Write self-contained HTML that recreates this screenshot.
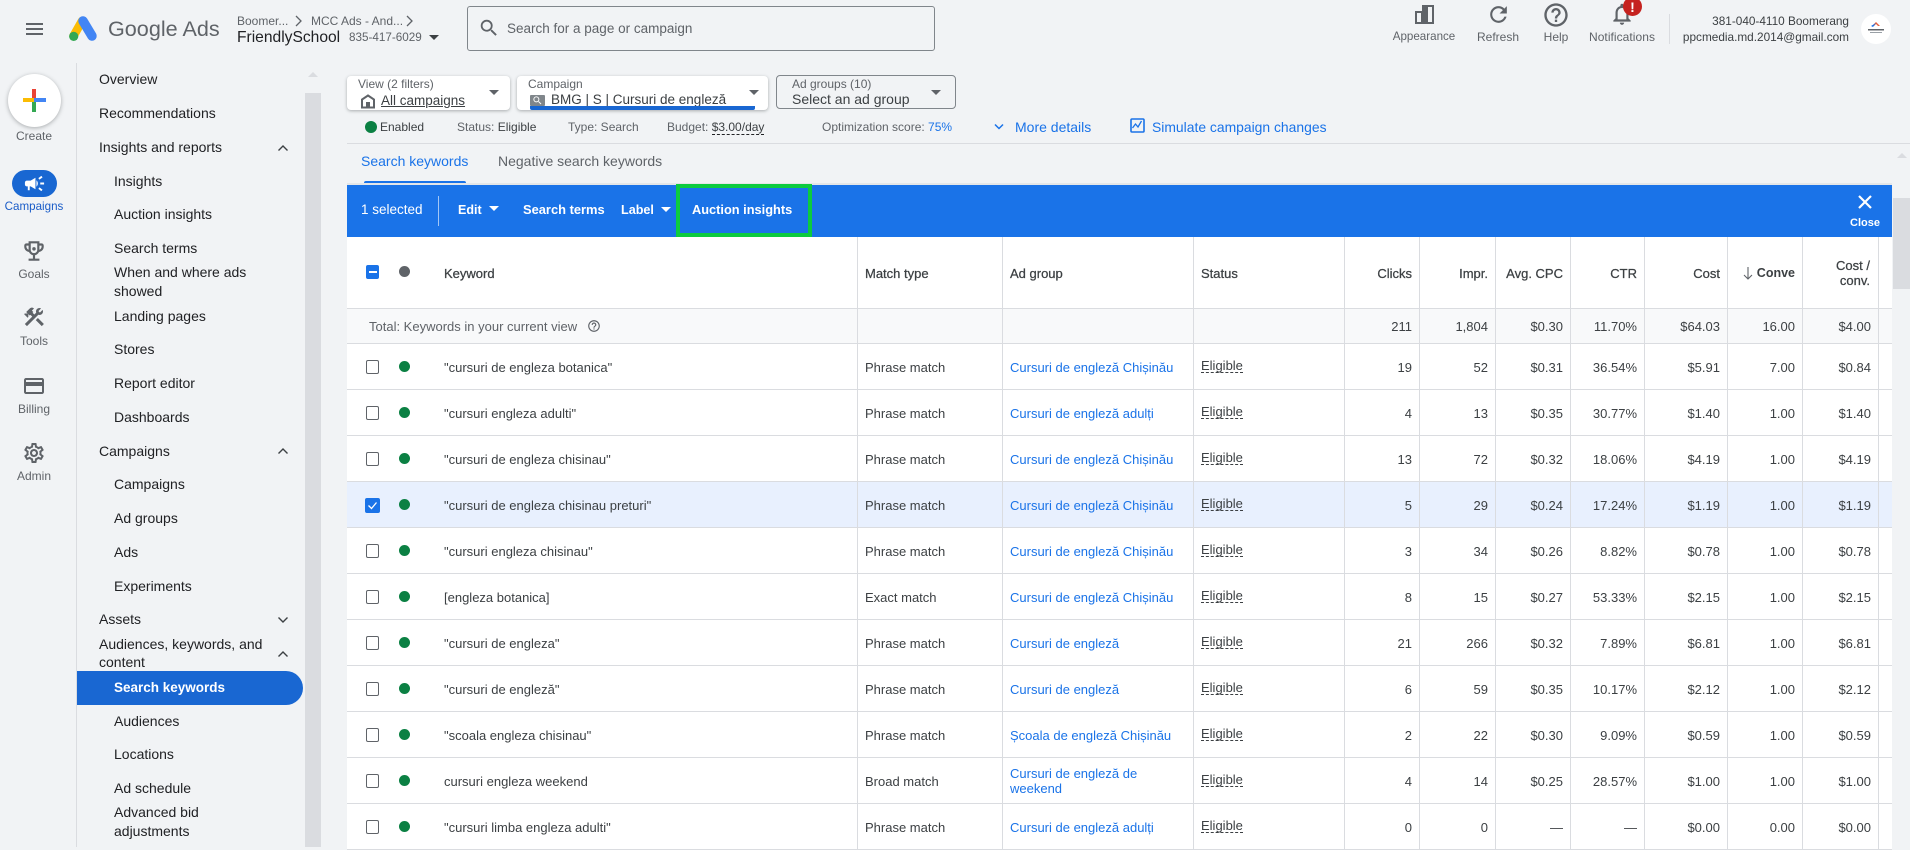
<!DOCTYPE html>
<html><head><meta charset="utf-8"><title>Google Ads</title>
<style>
html,body{margin:0;padding:0;width:1910px;height:847px;overflow:hidden;background:#f1f3f5;font-family:"Liberation Sans",sans-serif;color:#3c4043}
*{box-sizing:border-box}
.t{position:absolute;white-space:nowrap;line-height:16px;font-size:13px}
.nav{font-size:14px;color:#202124}
.c{transform:translateX(-50%);font-size:12px;color:#5f6368}
svg{position:absolute;display:block}
.b{position:absolute}
.card{position:absolute;background:#fff;border-radius:4px;box-shadow:0 1px 3px rgba(60,64,67,.4)}
.caret{position:absolute;width:0;height:0;border-left:5px solid transparent;border-right:5px solid transparent;border-top:5px solid #5f6368}
table{position:absolute;left:347px;top:237px;width:1545px;border-collapse:separate;border-spacing:0;table-layout:fixed;background:#fff;font-size:13px;color:#3c4043}
td,th{border-right:1px solid #dadce0;border-bottom:1px solid #dadce0;padding:1px 7px 0 7px;height:46px;overflow:hidden;font-weight:normal;text-align:left;white-space:nowrap;line-height:15px}
td.n,th.n{text-align:right;padding-right:7px}
td.e{border-right:0}
th{height:72px;-webkit-text-stroke:.25px #3c4043}
tr.tot td{height:35px;background:#f8f9fa}
tr.sel td{background:#e8f0fe}
td.k{position:relative;padding-left:97px}
.cb{position:absolute;left:19px;top:16px;width:13px;height:14px;border:1px solid #5f6368;border-radius:2px;background:#fff}
.dot{position:absolute;left:52px;top:17px;width:11px;height:11px;border-radius:50%;background:#0b8043}
a{color:#1a73e8;text-decoration:none}
.el{display:inline-block;position:relative;top:-2px;line-height:13px;border-bottom:1px dashed #3c4043}
</style></head><body>

<!-- top bar -->
<div class="b" style="left:26px;top:23px;width:17px;height:2px;background:#5f6368"></div>
<div class="b" style="left:26px;top:28px;width:17px;height:2px;background:#5f6368"></div>
<div class="b" style="left:26px;top:33px;width:17px;height:2px;background:#5f6368"></div>
<svg style="left:64px;top:12px" width="40" height="34" viewBox="64 12 40 34"><path d="M82 21 L73.5 36" stroke="#fbbc04" stroke-width="8.5" stroke-linecap="round"/><path d="M83 21 L92 36" stroke="#4285f4" stroke-width="9.5" stroke-linecap="round"/><circle cx="73.7" cy="36.4" r="4.6" fill="#34a853"/></svg>
<div class="t" style="left:108px;top:17px;font-size:21.6px;line-height:24px;color:#5f6368">Google Ads</div>
<div class="t" style="left:237px;top:13px;font-size:12px;color:#5f6368">Boomer...</div>
<svg style="left:293px;top:14px" width="12" height="14" viewBox="0 0 12 14"><path d="M3 2l5 5-5 5" fill="none" stroke="#5f6368" stroke-width="1.3"/></svg>
<div class="t" style="left:311px;top:13px;font-size:12px;color:#5f6368">MCC Ads - And...</div>
<svg style="left:404px;top:14px" width="12" height="14" viewBox="0 0 12 14"><path d="M3 2l5 5-5 5" fill="none" stroke="#5f6368" stroke-width="1.3"/></svg>
<div class="t" style="left:237px;top:30px;font-size:15.6px;color:#202124">FriendlySchool</div>
<div class="t" style="left:349px;top:30px;font-size:11.7px;color:#5f6368">835-417-6029</div>
<div class="caret" style="left:429px;top:35px;border-top-color:#3c4043"></div>
<div class="b" style="left:467px;top:6px;width:468px;height:45px;border:1px solid #80868b;border-radius:3px"></div>
<svg style="left:478px;top:17px" width="22" height="22" viewBox="0 0 24 24" fill="#5f6368"><path d="M15.5 14h-.79l-.28-.27A6.471 6.471 0 0 0 16 9.5 6.5 6.5 0 1 0 9.5 16c1.61 0 3.09-.59 4.23-1.57l.27.28v.79l5 4.99L20.49 19l-4.99-5zm-6 0C7.01 14 5 11.99 5 9.5S7.01 5 9.5 5 14 7.01 14 9.5 11.99 14 9.5 14z"/></svg>
<div class="t" style="left:507px;top:21px;font-size:13.5px;color:#5f6368">Search for a page or campaign</div>

<svg style="left:1415px;top:5px" width="19" height="19" viewBox="0 0 19 19"><path d="M7 0H19V19H0V6H7Z" fill="#5f6368"/><rect x="2" y="8" width="4" height="9" fill="#f1f3f5"/><rect x="13" y="2" width="4" height="15" fill="#f1f3f5"/></svg>
<svg style="left:1486px;top:2px" width="25" height="25" viewBox="0 0 24 24" fill="#5f6368"><path d="M17.65 6.35A7.958 7.958 0 0 0 12 4c-4.42 0-7.99 3.58-7.99 8s3.57 8 7.99 8c3.73 0 6.84-2.55 7.73-6h-2.08A5.99 5.99 0 0 1 12 18c-3.31 0-6-2.69-6-6s2.69-6 6-6c1.66 0 3.14.69 4.22 1.78L13 11h7V4l-2.35 2.35z"/></svg>
<svg style="left:1542px;top:1px" width="28" height="28" viewBox="0 0 24 24" fill="#5f6368"><path d="M11 18h2v-2h-2v2zm1-16C6.48 2 2 6.48 2 12s4.48 10 10 10 10-4.48 10-10S17.52 2 12 2zm0 18c-4.41 0-8-3.59-8-8s3.59-8 8-8 8 3.59 8 8-3.59 8-8 8zm0-14c-2.21 0-4 1.79-4 4h2c0-1.1.9-2 2-2s2 .9 2 2c0 2-3 1.75-3 5h2c0-2.25 3-2.5 3-5 0-2.21-1.79-4-4-4z"/></svg>
<svg style="left:1609px;top:1px" width="26" height="26" viewBox="0 0 24 24" fill="#5f6368"><path d="M12 22c1.1 0 2-.9 2-2h-4c0 1.1.9 2 2 2zm6-6v-5c0-3.07-1.63-5.64-4.5-6.32V4c0-.83-.67-1.5-1.5-1.5s-1.5.67-1.5 1.5v.68C7.64 5.36 6 7.92 6 11v5l-2 2v1h16v-1l-2-2zm-2 1H8v-6c0-2.48 1.51-4.5 4-4.5s4 2.02 4 4.5v6z"/></svg>
<div class="b" style="left:1623px;top:-3px;width:19px;height:19px;border-radius:50%;background:#c5221f"></div>
<div class="t" style="left:1628px;top:-1px;width:9px;text-align:center;font-size:14px;font-weight:bold;color:#fff">!</div>
<div class="t c" style="left:1424px;top:29px;font-size:11.6px">Appearance</div>
<div class="t c" style="left:1498px;top:29px">Refresh</div>
<div class="t c" style="left:1556px;top:29px">Help</div>
<div class="t c" style="left:1622px;top:29px;letter-spacing:.05px">Notifications</div>
<div class="b" style="left:1669px;top:14px;width:1px;height:30px;background:#dadce0"></div>
<div class="t" style="right:61px;top:13px;font-size:11.8px;color:#3c4043">381-040-4110 Boomerang</div>
<div class="t" style="right:61px;top:29px;font-size:11.8px;color:#3c4043">ppcmedia.md.2014@gmail.com</div>
<div class="b" style="left:1861px;top:14px;width:30px;height:30px;border-radius:50%;background:#fff"></div>
<svg style="left:1864px;top:20px" width="24" height="16" viewBox="0 0 24 16"><path d="M12 2l4 4h-2l-2-2-2 2H8z" fill="#e8603c"/><path d="M7 6l5-3-3 4z" fill="#1a73e8"/><rect x="4" y="9" width="16" height="1.5" fill="#5f6368"/><rect x="6" y="12" width="12" height="1" fill="#9aa0a6"/></svg>

<!-- left rail -->
<div class="b" style="left:76px;top:63px;width:1px;height:784px;background:#dadce0"></div>
<div class="b" style="left:8px;top:74px;width:53px;height:53px;border-radius:50%;background:#fff;box-shadow:0 1px 4px rgba(60,64,67,.4)"></div>
<div class="b" style="left:32px;top:89px;width:4px;height:10px;background:#ea4335"></div>
<div class="b" style="left:23px;top:98px;width:11px;height:4px;background:#fbbc04"></div>
<div class="b" style="left:34px;top:98px;width:12px;height:4px;background:#4285f4"></div>
<div class="b" style="left:32px;top:102px;width:4px;height:10px;background:#34a853"></div>
<div class="t c" style="left:34px;top:128px">Create</div>
<div class="b" style="left:12px;top:170px;width:45px;height:27px;border-radius:14px;background:#1967d2"></div>
<svg style="left:23px;top:172px" width="23" height="23" viewBox="0 0 24 24" fill="#fff"><path d="M18 11v2h4v-2h-4zm-2 6.61c.96.71 2.21 1.65 3.2 2.39.4-.53.8-1.07 1.2-1.6-.99-.74-2.24-1.68-3.2-2.4-.4.54-.8 1.08-1.2 1.61zM20.4 5.6c-.4-.53-.8-1.07-1.2-1.6-.99.74-2.24 1.68-3.2 2.4.4.53.8 1.07 1.2 1.6.96-.72 2.21-1.65 3.2-2.4zM4 9c-1.1 0-2 .9-2 2v2c0 1.1.9 2 2 2h1v4h2v-4h1l5 3V6L8 9H4zm11.5 3c0-1.33-.58-2.53-1.5-3.35v6.69c.92-.81 1.5-2.01 1.5-3.34z"/></svg>
<div class="t c" style="left:34px;top:199px;color:#1a5cc8;font-size:11.6px">Campaigns</div>
<svg style="left:21px;top:238px" width="26" height="26" viewBox="0 0 24 24" fill="#5f6368"><path d="M19 5h-2V3H7v2H5c-1.1 0-2 .9-2 2v1c0 2.55 1.92 4.63 4.39 4.94.63 1.5 1.98 2.63 3.61 2.96V19H7v2h10v-2h-4v-3.1c1.63-.33 2.98-1.46 3.61-2.96C19.08 12.63 21 10.55 21 8V7c0-1.1-.9-2-2-2zM5 8V7h2v3.82C5.84 10.4 5 9.3 5 8zm7 6c-1.65 0-3-1.35-3-3V5h6v6c0 1.65-1.35 3-3 3zm7-6c0 1.3-.84 2.4-2 2.82V7h2v1z"/><circle cx="12" cy="10" r="1.6"/></svg>
<div class="t c" style="left:34px;top:266px">Goals</div>
<svg style="left:22px;top:305px" width="24" height="24" viewBox="0 0 24 24" fill="#5f6368"><path d="M13.783 15.172l2.121-2.121 5.996 5.996-2.121 2.121zM17.5 10c1.93 0 3.5-1.57 3.5-3.5 0-.58-.16-1.12-.41-1.6l-2.7 2.7-1.49-1.49 2.7-2.7c-.48-.25-1.02-.41-1.6-.41C15.57 3 14 4.57 14 6.5c0 .41.08.8.21 1.16l-1.85 1.85-1.78-1.78.71-.71-1.41-1.41L12 3.49c-1.17-1.17-3.07-1.17-4.24 0L4.22 7.03l1.41 1.41H2.81l-.71.71 3.54 3.54.71-.71V9.15l1.41 1.41.71-.71 1.78 1.78-7.41 7.41 2.12 2.12L16.34 9.79c.36.13.75.21 1.16.21z"/></svg>
<div class="t c" style="left:34px;top:333px">Tools</div>
<svg style="left:22px;top:374px" width="24" height="24" viewBox="0 0 24 24" fill="#5f6368"><path d="M20 4H4c-1.11 0-1.99.89-1.99 2L2 18c0 1.11.89 2 2 2h16c1.11 0 2-.89 2-2V6c0-1.11-.89-2-2-2zm0 14H4v-6h16v6zm0-10H4V6h16v2z"/></svg>
<div class="t c" style="left:34px;top:401px">Billing</div>
<svg style="left:22px;top:441px" width="24" height="24" viewBox="0 0 24 24" fill="#5f6368"><path d="M19.43 12.98c.04-.32.07-.64.07-.98 0-.34-.03-.66-.07-.98l2.11-1.65c.19-.15.24-.42.12-.64l-2-3.46c-.09-.16-.26-.25-.44-.25-.06 0-.12.01-.17.03l-2.49 1c-.52-.4-1.08-.73-1.69-.98l-.38-2.65C14.46 2.18 14.25 2 14 2h-4c-.25 0-.46.18-.49.42l-.38 2.65c-.61.25-1.17.59-1.69.98l-2.49-1c-.06-.02-.12-.03-.18-.03-.17 0-.34.09-.43.25l-2 3.46c-.13.22-.07.49.12.64l2.11 1.65c-.04.32-.07.65-.07.98 0 .33.03.66.07.98l-2.11 1.65c-.19.15-.24.42-.12.64l2 3.46c.09.16.26.25.44.25.06 0 .12-.01.17-.03l2.49-1c.52.4 1.08.73 1.69.98l.38 2.65c.03.24.24.42.49.42h4c.25 0 .46-.18.49-.42l.38-2.65c.61-.25 1.17-.59 1.69-.98l2.49 1c.06.02.12.03.18.03.17 0 .34-.09.43-.25l2-3.46c.12-.22.07-.49-.12-.64l-2.11-1.65zm-1.98-1.71c.04.31.05.52.05.73 0 .21-.02.43-.05.73l-.14 1.13.89.7 1.08.84-.7 1.21-1.27-.51-1.04-.42-.9.68c-.43.32-.84.56-1.25.73l-1.06.43-.16 1.13-.2 1.35h-1.4l-.19-1.35-.16-1.13-1.06-.43c-.43-.18-.83-.41-1.23-.71l-.91-.7-1.06.43-1.27.51-.7-1.21 1.08-.84.89-.7-.14-1.13c-.03-.31-.05-.54-.05-.74s.02-.43.05-.73l.14-1.13-.89-.7-1.08-.84.7-1.21 1.27.51 1.04.42.9-.68c.43-.32.84-.56 1.25-.73l1.06-.43.16-1.13.2-1.35h1.39l.19 1.35.16 1.13 1.06.43c.43.18.83.41 1.23.71l.91.7 1.06-.43 1.27-.51.7 1.21-1.07.85-.89.7.14 1.13zM12 8c-2.21 0-4 1.79-4 4s1.79 4 4 4 4-1.79 4-4-1.79-4-4-4zm0 6c-1.1 0-2-.9-2-2s.9-2 2-2 2 .9 2 2-.9 2-2 2z"/></svg>
<div class="t c" style="left:34px;top:468px">Admin</div>

<!-- nav -->
<div class="t nav" style="left:99px;top:71px">Overview</div>
<div class="t nav" style="left:99px;top:105px">Recommendations</div>
<div class="t nav" style="left:99px;top:139px">Insights and reports</div>
<div class="t nav" style="left:114px;top:173px">Insights</div>
<div class="t nav" style="left:114px;top:206px">Auction insights</div>
<div class="t nav" style="left:114px;top:240px">Search terms</div>
<div class="t nav" style="left:114px;top:264px">When and where ads</div>
<div class="t nav" style="left:114px;top:283px">showed</div>
<div class="t nav" style="left:114px;top:308px">Landing pages</div>
<div class="t nav" style="left:114px;top:341px">Stores</div>
<div class="t nav" style="left:114px;top:375px">Report editor</div>
<div class="t nav" style="left:114px;top:409px">Dashboards</div>
<div class="t nav" style="left:99px;top:443px">Campaigns</div>
<div class="t nav" style="left:114px;top:476px">Campaigns</div>
<div class="t nav" style="left:114px;top:510px">Ad groups</div>
<div class="t nav" style="left:114px;top:544px">Ads</div>
<div class="t nav" style="left:114px;top:578px">Experiments</div>
<div class="t nav" style="left:99px;top:611px">Assets</div>
<div class="t nav" style="left:99px;top:636px">Audiences, keywords, and</div>
<div class="t nav" style="left:99px;top:654px">content</div>
<div class="b" style="left:77px;top:671px;width:226px;height:34px;background:#1967d2;border-radius:0 17px 17px 0"></div>
<div class="t nav" style="left:114px;top:680px;color:#fff;font-weight:bold;font-size:13.5px">Search keywords</div>
<div class="t nav" style="left:114px;top:713px">Audiences</div>
<div class="t nav" style="left:114px;top:746px">Locations</div>
<div class="t nav" style="left:114px;top:780px">Ad schedule</div>
<div class="t nav" style="left:114px;top:804px">Advanced bid</div>
<div class="t nav" style="left:114px;top:823px">adjustments</div>
<svg style="left:277px;top:144px" width="12" height="8" viewBox="0 0 12 8"><path d="M1.5 6.5L6 2l4.500 4.500" fill="none" stroke="#3c4043" stroke-width="1.4"/></svg>
<svg style="left:277px;top:447px" width="12" height="8" viewBox="0 0 12 8"><path d="M1.500 6.500L6 2l4.500 4.500" fill="none" stroke="#3c4043" stroke-width="1.4"/></svg>
<svg style="left:277px;top:616px" width="12" height="8" viewBox="0 0 12 8"><path d="M1.500 1.500L6 6l4.500-4.500" fill="none" stroke="#3c4043" stroke-width="1.4"/></svg>
<svg style="left:277px;top:650px" width="12" height="8" viewBox="0 0 12 8"><path d="M1.500 6.500L6 2l4.500 4.500" fill="none" stroke="#3c4043" stroke-width="1.4"/></svg>
<div class="b" style="left:305px;top:93px;width:16px;height:754px;background:#dadce0"></div>
<div class="b" style="left:308px;top:72px;width:0;height:0;border-left:5px solid transparent;border-right:5px solid transparent;border-bottom:5px solid #dadce0"></div>

<!-- filters -->
<div class="card" style="left:347px;top:76px;width:163px;height:34px"></div>
<div class="t" style="left:358px;top:76px;font-size:12px;color:#5f6368">View (2 filters)</div>
<svg style="left:360px;top:94px" width="16" height="15" viewBox="0 0 16 15"><path d="M8 1.500L2 5.500V13.500H14V5.500Z" fill="none" stroke="#5f6368" stroke-width="2"/><rect x="6" y="8" width="4" height="5" fill="#5f6368"/></svg>
<div class="t" style="left:381px;top:93px;font-size:13.5px;color:#3c4043;text-decoration:underline">All campaigns</div>
<div class="caret" style="left:489px;top:90px"></div>
<div class="card" style="left:517px;top:76px;width:251px;height:34px"></div>
<div class="t" style="left:528px;top:76px;font-size:12px;color:#5f6368">Campaign</div>
<div class="b" style="left:530px;top:95px;width:15px;height:11px;background:#80868b;border-radius:1px"></div>
<svg style="left:532px;top:95px" width="11" height="11" viewBox="0 0 24 24" fill="#fff"><path d="M15.500 14h-.79l-.28-.27A6.471 6.471 0 0 0 16 9.500 6.500 6.500 0 1 0 9.500 16c1.610 0 3.090-.59 4.230-1.570l.27.28v.79l5 4.990L20.490 19l-4.990-5zm-6 0C7.010 14 5 11.990 5 9.500S7.010 5 9.500 5 14 7.010 14 9.500 11.990 14 9.500 14z"/></svg>
<div class="t" style="left:551px;top:92px;font-size:13.5px;color:#3c4043">BMG | S | Cursuri de engleză</div>
<div class="b" style="left:530px;top:106px;width:225px;height:4px;background:#1967d2;border-radius:0 0 2px 2px"></div>
<div class="caret" style="left:749px;top:90px"></div>
<div class="b" style="left:776px;top:75px;width:180px;height:34px;border:1px solid #80868b;border-radius:4px"></div>
<div class="t" style="left:792px;top:76px;font-size:12px;color:#5f6368">Ad groups (10)</div>
<div class="t" style="left:792px;top:91px;font-size:14px;color:#3c4043">Select an ad group</div>
<div class="caret" style="left:931px;top:90px"></div>

<!-- status row -->
<div class="b" style="left:365px;top:121px;width:12px;height:12px;border-radius:50%;background:#0b8043"></div>
<div class="t" style="left:380px;top:119px;font-size:12px">Enabled</div>
<div class="t" style="left:457px;top:119px;font-size:12px;color:#5f6368">Status: <span style="color:#3c4043">Eligible</span></div>
<div class="t" style="left:568px;top:119px;font-size:12px;color:#5f6368">Type: Search</div>
<div class="t" style="left:667px;top:119px;font-size:12px;color:#5f6368">Budget: <span style="color:#3c4043;border-bottom:1px dashed #202124">$3.00/day</span></div>
<div class="t" style="left:822px;top:119px;font-size:12px;color:#5f6368">Optimization score: <span style="color:#1a73e8">75%</span></div>
<svg style="left:993px;top:123px" width="12" height="8" viewBox="0 0 12 8"><path d="M2 1.500L6 5.500l4-4" fill="none" stroke="#1a73e8" stroke-width="1.500"/></svg>
<div class="t" style="left:1015px;top:119px;color:#1a73e8;font-size:14px">More details</div>
<svg style="left:1130px;top:118px" width="15" height="15" viewBox="0 0 15 15"><rect x="1" y="1" width="13" height="13" rx="1" fill="none" stroke="#1a73e8" stroke-width="1.600"/><path d="M2.500 10L5.500 6l2.500 3L11.500 3" fill="none" stroke="#1a73e8" stroke-width="1.300"/></svg>
<div class="t" style="left:1152px;top:119px;color:#1a73e8;font-size:13.9px">Simulate campaign changes</div>
<div class="b" style="left:347px;top:143px;width:1563px;height:1px;background:#dadce0"></div>

<!-- tabs -->
<div class="t" style="left:361px;top:153px;color:#1a73e8;font-size:14px">Search keywords</div>
<div class="t" style="left:498px;top:153px;color:#5f6368;font-size:14px">Negative search keywords</div>
<div class="b" style="left:364px;top:181px;width:102px;height:3px;background:#1a73e8;border-radius:2px 2px 0 0"></div>
<div class="b" style="left:1897px;top:153px;width:0;height:0;border-left:5px solid transparent;border-right:5px solid transparent;border-bottom:5px solid #dadce0"></div>
<div class="b" style="left:1893px;top:198px;width:17px;height:91px;background:#dadce0"></div>

<!-- action bar -->
<div class="b" style="left:347px;top:183px;width:1545px;height:2px;background:#e4e6e8"></div>
<div class="b" style="left:347px;top:185px;width:1545px;height:52px;background:#1a73e8"></div>
<div class="t" style="left:361px;top:202px;color:#fff;font-size:13.5px">1 selected</div>
<div class="b" style="left:438px;top:196px;width:1px;height:30px;background:rgba(255,255,255,.6)"></div>
<div class="t" style="left:458px;top:202px;color:#fff;font-size:12.5px;font-weight:bold">Edit</div>
<div class="caret" style="left:489px;top:206px;border-top-color:#fff"></div>
<div class="t" style="left:523px;top:202px;color:#fff;font-size:12.9px;font-weight:bold">Search terms</div>
<div class="t" style="left:621px;top:202px;color:#fff;font-size:12.6px;font-weight:bold">Label</div>
<div class="caret" style="left:661px;top:207px;border-top-color:#fff"></div>
<div class="t" style="left:692px;top:202px;color:#fff;font-size:12.8px;font-weight:bold">Auction insights</div>
<div class="b" style="left:676px;top:184px;width:136px;height:53px;border:4px solid #0ccb3f"></div>
<svg style="left:1857px;top:194px" width="16" height="16" viewBox="0 0 16 16"><path d="M2 2l12 12M14 2L2 14" stroke="#fff" stroke-width="2.200"/></svg>
<div class="t" style="left:1865px;top:215px;transform:translateX(-50%);color:#fff;font-size:11px;font-weight:bold">Close</div>

<!-- table -->
<table>
<colgroup><col style="width:511px"><col style="width:145px"><col style="width:191px"><col style="width:151px"><col style="width:75px"><col style="width:76px"><col style="width:75px"><col style="width:74px"><col style="width:83px"><col style="width:75px"><col style="width:76px"><col></colgroup>
<tr><th class="k" style="position:relative;padding-left:97px"><span class="cb" style="top:28px;background:#1a73e8;border-color:#1a73e8"></span><span class="b" style="left:22px;top:34px;width:8px;height:2px;background:#fff"></span><span class="dot" style="top:29px;background:#5f6368"></span>Keyword</th><th>Match type</th><th>Ad group</th><th>Status</th><th class="n">Clicks</th><th class="n">Impr.</th><th class="n">Avg. CPC</th><th class="n">CTR</th><th class="n">Cost</th><th class="n" style="font-weight:bold;font-size:12.5px;-webkit-text-stroke:0;padding-left:0;position:relative"><svg style="left:15px;top:29px" width="10" height="14" viewBox="0 0 10 14"><path d="M5 1V13M1 9l4 4 4-4" fill="none" stroke="#5f6368" stroke-width="1.100"/></svg>Conve</th><th class="n" style="padding-right:8px">Cost /<br>conv.</th><th class="e" style="border-right:0"></th></tr>
<tr class="tot"><td style="padding-left:22px;font-size:13px;color:#5f6368;position:relative">Total: Keywords in your current view<svg style="left:240px;top:10px" width="14" height="14" viewBox="0 0 24 24" fill="#5f6368"><path d="M11 18h2v-2h-2v2zm1-16C6.48 2 2 6.48 2 12s4.48 10 10 10 10-4.48 10-10S17.52 2 12 2zm0 18c-4.41 0-8-3.59-8-8s3.59-8 8-8 8 3.59 8 8-3.59 8-8 8zm0-14c-2.21 0-4 1.790-4 4h2c0-1.100.9-2 2-2s2 .9 2 2c0 2-3 1.750-3 5h2c0-2.250 3-2.500 3-5 0-2.210-1.790-4-4-4z"/></svg></td><td></td><td></td><td></td><td class="n">211</td><td class="n">1,804</td><td class="n">$0.30</td><td class="n">11.70%</td><td class="n">$64.03</td><td class="n">16.00</td><td class="n">$4.00</td><td class="e"></td></tr>
<tr><td class="k"><span class="cb"></span><span class="dot"></span>"cursuri de engleza botanica"</td><td>Phrase match</td><td><a>Cursuri de engleză Chișinău</a></td><td><span class="el">Eligible</span></td><td class="n">19</td><td class="n">52</td><td class="n">$0.31</td><td class="n">36.54%</td><td class="n">$5.91</td><td class="n">7.00</td><td class="n">$0.84</td><td class="e"></td></tr>
<tr><td class="k"><span class="cb"></span><span class="dot"></span>"cursuri engleza adulti"</td><td>Phrase match</td><td><a>Cursuri de engleză adulți</a></td><td><span class="el">Eligible</span></td><td class="n">4</td><td class="n">13</td><td class="n">$0.35</td><td class="n">30.77%</td><td class="n">$1.40</td><td class="n">1.00</td><td class="n">$1.40</td><td class="e"></td></tr>
<tr><td class="k"><span class="cb"></span><span class="dot"></span>"cursuri de engleza chisinau"</td><td>Phrase match</td><td><a>Cursuri de engleză Chișinău</a></td><td><span class="el">Eligible</span></td><td class="n">13</td><td class="n">72</td><td class="n">$0.32</td><td class="n">18.06%</td><td class="n">$4.19</td><td class="n">1.00</td><td class="n">$4.19</td><td class="e"></td></tr>
<tr class="sel"><td class="k"><span class="cb" style="background:#1a73e8;border-color:#1a73e8;left:18px;width:15px;height:15px"></span><svg style="left:20px;top:18px" width="11" height="11" viewBox="0 0 11 11"><path d="M1.500 5.500L4.500 8.500 9.500 2.500" fill="none" stroke="#fff" stroke-width="1.300"/></svg><span class="dot"></span>"cursuri de engleza chisinau preturi"</td><td>Phrase match</td><td><a>Cursuri de engleză Chișinău</a></td><td><span class="el">Eligible</span></td><td class="n">5</td><td class="n">29</td><td class="n">$0.24</td><td class="n">17.24%</td><td class="n">$1.19</td><td class="n">1.00</td><td class="n">$1.19</td><td class="e"></td></tr>
<tr><td class="k"><span class="cb"></span><span class="dot"></span>"cursuri engleza chisinau"</td><td>Phrase match</td><td><a>Cursuri de engleză Chișinău</a></td><td><span class="el">Eligible</span></td><td class="n">3</td><td class="n">34</td><td class="n">$0.26</td><td class="n">8.82%</td><td class="n">$0.78</td><td class="n">1.00</td><td class="n">$0.78</td><td class="e"></td></tr>
<tr><td class="k"><span class="cb"></span><span class="dot"></span>[engleza botanica]</td><td>Exact match</td><td><a>Cursuri de engleză Chișinău</a></td><td><span class="el">Eligible</span></td><td class="n">8</td><td class="n">15</td><td class="n">$0.27</td><td class="n">53.33%</td><td class="n">$2.15</td><td class="n">1.00</td><td class="n">$2.15</td><td class="e"></td></tr>
<tr><td class="k"><span class="cb"></span><span class="dot"></span>"cursuri de engleza"</td><td>Phrase match</td><td><a>Cursuri de engleză</a></td><td><span class="el">Eligible</span></td><td class="n">21</td><td class="n">266</td><td class="n">$0.32</td><td class="n">7.89%</td><td class="n">$6.81</td><td class="n">1.00</td><td class="n">$6.81</td><td class="e"></td></tr>
<tr><td class="k"><span class="cb"></span><span class="dot"></span>"cursuri de engleză"</td><td>Phrase match</td><td><a>Cursuri de engleză</a></td><td><span class="el">Eligible</span></td><td class="n">6</td><td class="n">59</td><td class="n">$0.35</td><td class="n">10.17%</td><td class="n">$2.12</td><td class="n">1.00</td><td class="n">$2.12</td><td class="e"></td></tr>
<tr><td class="k"><span class="cb"></span><span class="dot"></span>"scoala engleza chisinau"</td><td>Phrase match</td><td><a>Școala de engleză Chișinău</a></td><td><span class="el">Eligible</span></td><td class="n">2</td><td class="n">22</td><td class="n">$0.30</td><td class="n">9.09%</td><td class="n">$0.59</td><td class="n">1.00</td><td class="n">$0.59</td><td class="e"></td></tr>
<tr><td class="k"><span class="cb"></span><span class="dot"></span>cursuri engleza weekend</td><td>Broad match</td><td><a>Cursuri de engleză de<br>weekend</a></td><td><span class="el">Eligible</span></td><td class="n">4</td><td class="n">14</td><td class="n">$0.25</td><td class="n">28.57%</td><td class="n">$1.00</td><td class="n">1.00</td><td class="n">$1.00</td><td class="e"></td></tr>
<tr><td class="k"><span class="cb"></span><span class="dot"></span>"cursuri limba engleza adulti"</td><td>Phrase match</td><td><a>Cursuri de engleză adulți</a></td><td><span class="el">Eligible</span></td><td class="n">0</td><td class="n">0</td><td class="n">—</td><td class="n">—</td><td class="n">$0.00</td><td class="n">0.00</td><td class="n">$0.00</td><td class="e"></td></tr>
</table>
</body></html>
